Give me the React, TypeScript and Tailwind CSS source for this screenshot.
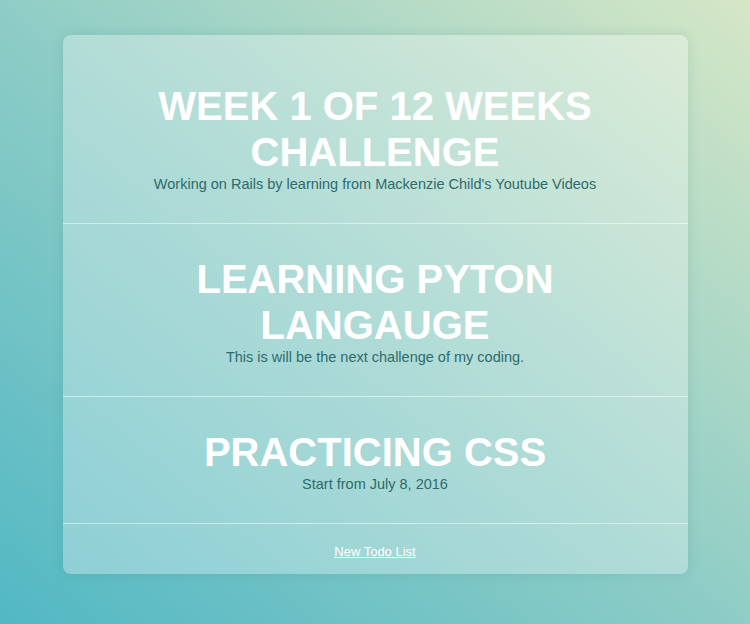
import React from 'react';

interface Todo {
  title: string;
  description: string;
}

const todos: Todo[] = [
  {
    title: 'Week 1 of 12 weeks challenge',
    description: "Working on Rails by learning from Mackenzie Child's Youtube Videos",
  },
  {
    title: 'Learning Pyton Langauge',
    description: 'This is will be the next challenge of my coding.',
  },
  {
    title: 'Practicing CSS',
    description: 'Start from July 8, 2016',
  },
];

export default function App() {
  return (
    <div
      className="min-h-[624px] w-full bg-[linear-gradient(to_top_right,#52b8c4,#8fcdc6_50%,#d6e7c6)] pt-[35px] font-['Liberation_Sans',Arial,sans-serif]"
    >
      <div className="mx-auto w-[625px] rounded-lg bg-white/30 pt-[16px] shadow-[0_0_12px_rgba(40,110,110,0.15)]">
        {todos.map((todo, i) => (
          <div
            key={i}
            className="border-b border-white/50 px-[40px] pt-[32px] pb-[30px] text-center"
          >
            <h2 className="text-[40px] leading-[46px] font-bold uppercase text-white">
              {todo.title}
            </h2>
            <p className="text-[14.5px] leading-[18px] text-[#2e6b6c]">{todo.description}</p>
          </div>
        ))}
        <div className="pt-[15px] pb-[11px] text-center">
          <a href="#" className="text-[13px] leading-5 text-white underline">
            New Todo List
          </a>
        </div>
      </div>
    </div>
  );
}
